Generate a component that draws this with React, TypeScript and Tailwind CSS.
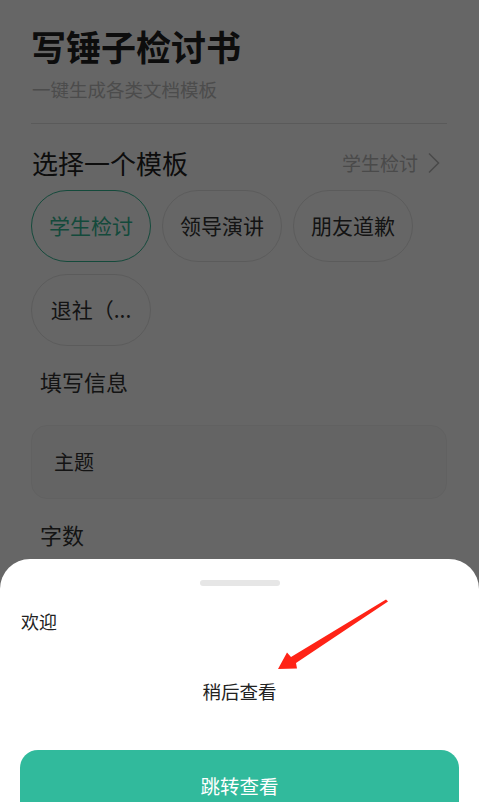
const templates = [
  { id: 1, label: "学生检讨", active: true },
  { id: 2, label: "领导演讲", active: false },
  { id: 3, label: "朋友道歉", active: false },
  { id: 4, label: "退社（...", active: false },
];

const font = { fontFamily: '"Noto Sans CJK SC", "Noto Sans", sans-serif' };

export default function App() {
  return (
    <div className="relative h-[802px] w-[479px] overflow-hidden bg-white text-[#222]" style={font}>
      {/* page under the sheet */}
      <div className="pl-[31px] pr-[32px] pt-[24px]">
        <h1 className="text-[35px] font-bold leading-[44px] text-[#222]">写锤子检讨书</h1>
        <p className="mt-[8px] pl-[1px] text-[18.5px] leading-[26px] text-[#bdbdbd]">一键生成各类文档模板</p>
        <div className="mt-[21px] h-px bg-[#e0e0e0]" />

        <div className="mt-[21px] flex items-center justify-between">
          <span className="pl-[1px] text-[26px] leading-[36px] text-[#222]">选择一个模板</span>
          <span className="flex items-center gap-[9px] pr-[6px] text-[19px] text-[#b8b8b8]">
            学生检讨
            <svg width="14" height="22" viewBox="0 0 14 22" fill="none">
              <path d="M2 1.5 L11.5 11 L2 20.5" stroke="#b8b8b8" strokeWidth="1.6" />
            </svg>
          </span>
        </div>

        <div className="mt-[9px] flex flex-wrap gap-x-[11px] gap-y-[12px]">
          {templates.map((t) => (
            <div
              key={t.id}
              className={`flex h-[72px] w-[120px] items-center justify-center rounded-full border text-[21px] ${
                t.active ? "border-[#34b895] text-[#34b895]" : "border-[#e4e4e4] text-[#333]"
              }`}
            >
              {t.label}
            </div>
          ))}
        </div>

        <p className="mt-[20px] pl-[9px] text-[22px] leading-[30px] text-[#333]">填写信息</p>
        <div className="mt-[29px] flex h-[74px] items-center rounded-[16px] border border-[#f2f2f2] bg-[#fafafa] pl-[22px] text-[20px] text-[#333]">
          主题
        </div>
        <p className="mt-[20px] pl-[9px] text-[22px] leading-[30px] text-[#333]">字数</p>
      </div>

      {/* dim overlay */}
      <div className="absolute inset-0 bg-black/60" />

      {/* bottom sheet */}
      <div className="absolute left-0 right-0 top-[559px] h-[300px] rounded-t-[30px] bg-white pt-[21px]">
        <div className="mx-auto h-[6px] w-[80px] rounded-full bg-[#e6e6e6]" />
        <p className="mt-[23px] px-[21px] text-[18px] leading-[24px] text-[#222]">欢迎</p>
        <p className="mt-[46px] text-center text-[18.5px] leading-[24px] text-[#222]">稍后查看</p>
        <div className="mx-[20px] mt-[47px] flex h-[72px] items-center justify-center rounded-[18px] bg-[#31ba9c] text-[19.5px] text-white">
          跳转查看
        </div>
      </div>

      {/* red annotation arrow */}
      <svg className="pointer-events-none absolute left-0 top-0" width="479" height="802" viewBox="0 0 479 802">
        <polygon
          points="386,599.5 388,601.5 296,663 297,668.5 278,669 287,652.5 291,657"
          fill="#ff2316"
        />
      </svg>
    </div>
  );
}
